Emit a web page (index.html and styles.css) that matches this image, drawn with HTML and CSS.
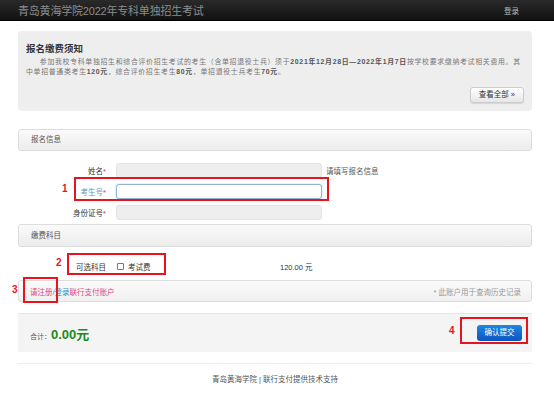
FILE: index.html
```html
<!DOCTYPE html>
<html lang="zh-CN">
<head>
  <meta charset="UTF-8" />
  <meta name="viewport" content="width=device-width, initial-scale=1.0" />
  <title>青岛黄海学院2022年专科单独招生考试</title>
  <link rel="stylesheet" href="styles.css">
</head>
<body>

  <div class="topbar">
    <span class="brand">青岛黄海学院2022年专科单独招生考试</span>
    <a class="login" href="#">登录</a>
  </div>

  <div class="page">
    <div class="notice">
      <h3>报名缴费须知</h3>
      <p>参加我校专科单独招生和综合评价招生考试的考生（含单招退役士兵）须于<b>2021年12月28日—2022年1月7日</b>按学校要求缴纳考试相关费用。其<br>中单招普通类考生<b>120元</b>，综合评价招生考生<b>80元</b>，单招退役士兵考生<b>70元</b>。</p>
      <div class="notice-more"><a class="btn" href="#">查看全部 »</a></div>
    </div>

    <div class="panel-head">报名信息</div>
    <div class="form">
      <div class="row">
        <label>姓名<i>*</i></label>
        <input class="field" type="text" disabled>
        <span class="help">请填写报名信息</span>
      </div>
      <div class="row">
        <label class="focus">考生号<i>*</i></label>
        <input class="field active" type="text">
      </div>
      <div class="row">
        <label>身份证号<i>*</i></label>
        <input class="field" type="text" disabled>
      </div>
    </div>

    <div class="panel-head tall">缴费科目</div>
    <div class="fee-row">
      <label>可选科目</label>
      <span class="check"><input type="checkbox"> 考试费</span>
      <span class="price">120.00 元</span>
    </div>

    <div class="account">
      <span><a class="pink" href="#">请注册</a><span class="blue">/</span><a class="blue" href="#">登录</a><span class="pink">联行支付账户</span></span>
      <span class="hint">* 此账户用于查询历史记录</span>
    </div>

    <div class="total">
      <span class="sum">合计：<strong>0.00元</strong></span>
      <a class="btn-primary" href="#">确认提交</a>
    </div>

    <div class="footer">青岛黄海学院 | 联行支付提供技术支持</div>
  </div>

  <!-- red annotation marks -->
  <div class="mark box1"></div>
  <div class="mark box2"></div>
  <div class="mark box3"></div>
  <div class="mark box4"></div>
  <span class="num n1">1</span>
  <span class="num n2">2</span>
  <span class="num n3">3</span>
  <span class="num n4">4</span>

</body>
</html>
```

FILE: styles.css
```css
body {
  margin: 0;
  position: relative;
  background: #fff;
  font-family: "Liberation Sans", "Noto Sans CJK SC", sans-serif;
  font-size: 7.5px;
  color: #333;
}
a {
  text-decoration: none;
}
.topbar {
  height: 21px;
  background: linear-gradient(#2a2a2a, #111);
  border-bottom: 1px solid #000;
  box-sizing: border-box;
  display: flex;
  align-items: center;
  justify-content: space-between;
  padding: 0 35px 0 18px;
}
.brand {
  color: #8c8c8c;
  font-size: 11px;
  letter-spacing: -0.2px;
}
.login {
  color: #bbb;
  font-size: 7.5px;
}
.page {
  width: 514px;
  margin-left: 18px;
}
.notice {
  margin-top: 10px;
  background: #eee;
  border-radius: 4px;
  padding: 11px 8px 8px;
}
.notice h3 {
  margin: 0;
  font-size: 9.5px;
  line-height: 14px;
  color: #333;
}
.notice p {
  margin: 1px 0 0;
  line-height: 10px;
  font-size: 6.9px;
  letter-spacing: 0.7px;
  color: #777;
  text-indent: 2em;
}
.notice p b {
  color: #555;
}
.notice-more {
  margin-top: 10px;
  text-align: right;
}
.btn {
  display: inline-block;
  height: 16px;
  line-height: 14px;
  box-sizing: border-box;
  padding: 0 8px;
  border: 1px solid #ccc;
  border-radius: 3px;
  background: linear-gradient(#fff, #e6e6e6);
  box-shadow: 0 1px 1px rgba(0,0,0,0.1);
  color: #333;
  font-size: 7.5px;
}
.panel-head {
  margin-top: 18px;
  height: 22px;
  box-sizing: border-box;
  line-height: 20px;
  padding-left: 12px;
  border: 1px solid #ddd;
  border-radius: 3px;
  background: linear-gradient(#fafafa, #ececec);
  color: #555;
}
.panel-head.tall {
  margin-top: 4px;
  height: 23px;
  line-height: 21px;
}
.form {
  padding-top: 12px;
  display: flex;
  flex-direction: column;
  gap: 6px;
}
.row, .fee-row {
  display: flex;
  align-items: center;
}
.row label, .fee-row label {
  width: 88px;
  margin-right: 10px;
  text-align: right;
  color: #333;
}
.row label i {
  font-style: normal;
  color: #e33;
}
.row label.focus {
  color: #5b96c8;
}
.field {
  width: 206px;
  height: 15px;
  box-sizing: border-box;
  margin: 0;
  border: 1px solid #e4e4e4;
  border-radius: 3px;
  background: #eee;
}
.field.active {
  background: #fff;
  border-color: #8db4d8;
  box-shadow: 0 0 2px rgba(82,168,236,0.5);
}
.help {
  margin-left: 4px;
  color: #555;
}
.fee-row {
  margin-top: 9px;
  height: 20px;
}
.check {
  width: 164px;
  display: flex;
  align-items: center;
  gap: 4px;
}
.check input {
  appearance: none;
  width: 7px;
  height: 7px;
  margin: 0 0 0 1px;
  border: 1px solid #777;
  border-radius: 1px;
  background: #fff;
}
.price {
  color: #333;
}
.account {
  margin-top: 4px;
  height: 22px;
  box-sizing: border-box;
  padding: 0 10px 0 11px;
  border: 1px solid #ddd;
  border-radius: 3px;
  background: linear-gradient(#fafafa, #f0f0f0);
  display: flex;
  align-items: center;
  justify-content: space-between;
}
.pink {
  color: #e2457b;
}
.blue {
  color: #2a8fd0;
}
.hint {
  color: #999;
}
.total {
  margin-top: 11px;
  height: 39px;
  box-sizing: border-box;
  padding: 0 10px 0 12px;
  background: #f4f4f4;
  border-top: 1px solid #e6e6e6;
  display: flex;
  align-items: center;
  justify-content: space-between;
}
.sum {
  font-size: 7px;
  color: #555;
}
.sum strong {
  font-size: 13px;
  color: #1c8a1c;
}
.btn-primary {
  display: inline-block;
  width: 45px;
  height: 16px;
  line-height: 16px;
  text-align: center;
  border-radius: 3px;
  background: linear-gradient(#2187dd, #0a55c2);
  color: #fff;
  font-size: 7.5px;
}
.footer {
  margin-top: 11px;
  border-top: 1px solid #eee;
  padding-top: 11px;
  line-height: 10px;
  text-align: center;
  color: #555;
}
.mark {
  position: absolute;
  border: 2px solid #e8141c;
  box-sizing: border-box;
}
.box1 { left: 74px; top: 177px; width: 255px; height: 24px; }
.box2 { left: 67px; top: 253px; width: 99px; height: 22px; }
.box3 { left: 23px; top: 277px; width: 35px; height: 26px; }
.box4 { left: 460px; top: 317px; width: 68px; height: 27px; }
.num {
  position: absolute;
  color: #e8141c;
  font-weight: bold;
  font-size: 10px;
  line-height: 10px;
}
.n1 { left: 62px; top: 184px; }
.n2 { left: 56px; top: 258px; }
.n3 { left: 12px; top: 285px; }
.n4 { left: 449px; top: 326px; }
```
